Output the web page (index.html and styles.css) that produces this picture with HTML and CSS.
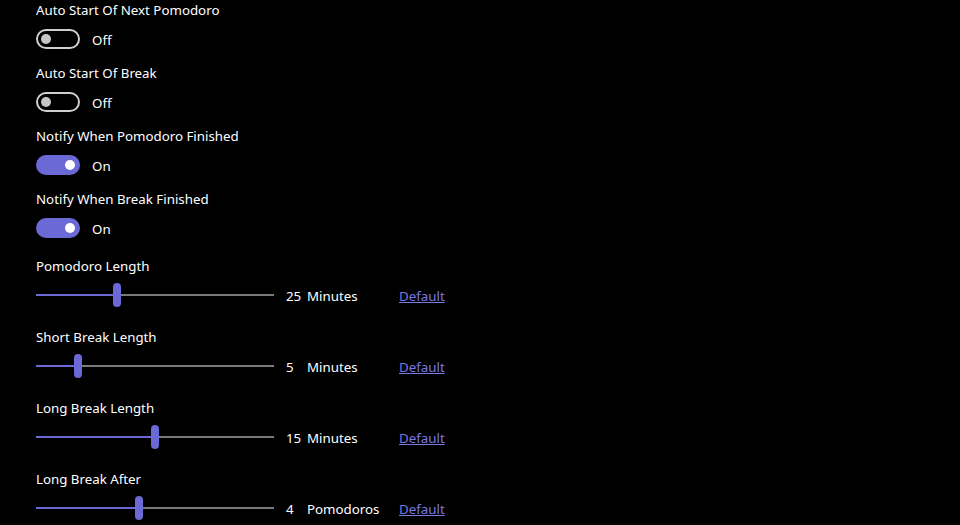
FILE: index.html
```html
<!DOCTYPE html>
<html>
<head>
<meta charset="utf-8">
<link rel="stylesheet" href="styles.css">
</head>
<body>
<div class="settings">
  <div class="toggle-group">
    <div class="label">Auto Start Of Next Pomodoro</div>
    <div class="toggle-row"><span class="toggle off"><span class="knob"></span></span><span class="state">Off</span></div>
  </div>
  <div class="toggle-group">
    <div class="label">Auto Start Of Break</div>
    <div class="toggle-row"><span class="toggle off"><span class="knob"></span></span><span class="state">Off</span></div>
  </div>
  <div class="toggle-group">
    <div class="label">Notify When Pomodoro Finished</div>
    <div class="toggle-row"><span class="toggle on"><span class="knob"></span></span><span class="state">On</span></div>
  </div>
  <div class="toggle-group">
    <div class="label">Notify When Break Finished</div>
    <div class="toggle-row"><span class="toggle on"><span class="knob"></span></span><span class="state">On</span></div>
  </div>

  <div class="slider-group first">
    <div class="label">Pomodoro Length</div>
    <div class="slider-row">
      <div class="slider"><div class="fill" style="width:81px"></div><div class="thumb" style="left:77px"></div></div>
      <span class="value">25</span><span class="unit">Minutes</span><a class="default" href="#">Default</a>
    </div>
  </div>
  <div class="slider-group">
    <div class="label">Short Break Length</div>
    <div class="slider-row">
      <div class="slider"><div class="fill" style="width:42px"></div><div class="thumb" style="left:38px"></div></div>
      <span class="value">5</span><span class="unit">Minutes</span><a class="default" href="#">Default</a>
    </div>
  </div>
  <div class="slider-group">
    <div class="label">Long Break Length</div>
    <div class="slider-row">
      <div class="slider"><div class="fill" style="width:119px"></div><div class="thumb" style="left:115px"></div></div>
      <span class="value">15</span><span class="unit">Minutes</span><a class="default" href="#">Default</a>
    </div>
  </div>
  <div class="slider-group">
    <div class="label">Long Break After</div>
    <div class="slider-row">
      <div class="slider"><div class="fill" style="width:103px"></div><div class="thumb" style="left:99px"></div></div>
      <span class="value">4</span><span class="unit">Pomodoros</span><a class="default" href="#">Default</a>
    </div>
  </div>
</div>
</body>
</html>
```
FILE: styles.css
```css
html, body {
  margin: 0;
  padding: 0;
  background: #000;
  height: 100%;
  overflow: hidden;
}
body {
  color: #fff;
  font-family: "Noto Sans", "Open Sans", sans-serif;
  font-size: 13.3px;
}
.settings {
  padding-left: 36px;
  display: flex;
  flex-direction: column;
}
.label {
  height: 20px;
  line-height: 20px;
  white-space: nowrap;
}
.toggle-group {
  display: flex;
  flex-direction: column;
  gap: 9px;
  margin-bottom: 14px;
}
.toggle-row {
  display: flex;
  align-items: center;
  height: 20px;
  gap: 12px;
}
.toggle {
  box-sizing: border-box;
  width: 44px;
  height: 20px;
  border-radius: 10px;
  display: flex;
  align-items: center;
  padding: 0 3px 0 5px;
}
.toggle.off {
  border: 2px solid #cfcfcf;
  padding-left: 3px;
}
.toggle.on {
  background: #6b69d6;
  justify-content: flex-end;
  padding-right: 5px;
}
.knob {
  width: 10px;
  height: 10px;
  border-radius: 50%;
}
.toggle.off .knob { background: #c6c6c6; }
.toggle.on .knob { background: #fff; }
.state {
  line-height: 20px;
  padding-top: 2px;
}
.slider-group {
  display: flex;
  flex-direction: column;
  gap: 7px;
  margin-bottom: 20px;
}
.slider-group.first {
  margin-top: 4px;
}
.slider-row {
  display: flex;
  align-items: center;
  height: 24px;
}
.slider {
  position: relative;
  width: 238px;
  height: 2px;
  background: #7a7a7a;
}
.fill {
  height: 2px;
  background: #6b69d6;
}
.thumb {
  position: absolute;
  top: -11px;
  width: 8px;
  height: 24px;
  border-radius: 4px;
  background: #6b69d6;
}
.value, .unit, .default {
  line-height: 24px;
  padding-top: 2px;
}
.value {
  margin-left: 12px;
  width: 21px;
}
.unit {
  width: 92px;
}
.default {
  color: #7b79e3;
  text-decoration: underline;
}
```
